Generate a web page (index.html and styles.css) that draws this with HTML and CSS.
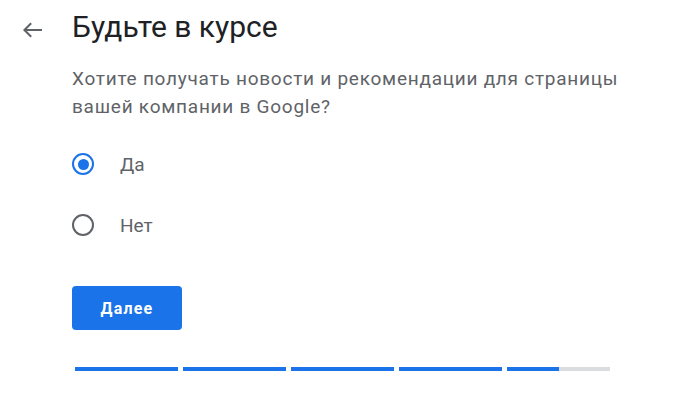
FILE: index.html
```html
<!DOCTYPE html>
<html lang="ru">
<head>
<meta charset="utf-8">
<link rel="stylesheet" href="styles.css">
</head>
<body>
<div class="page">
  <div class="header">
    <div class="back">
      <svg width="20" height="16" viewBox="0 0 20 16"><path d="M20 8H2.5M9.2 1.2L2.4 8l6.8 6.8" fill="none" stroke="#5f6368" stroke-width="2"/></svg>
    </div>
    <h1 class="title">Будьте в курсе</h1>
  </div>
  <div class="content">
    <p class="desc">Хотите получать новости и рекомендации для страницы вашей компании в Google?</p>
    <div class="options">
      <label class="option"><span class="radio checked"></span><span class="label">Да</span></label>
      <label class="option"><span class="radio"></span><span class="label">Нет</span></label>
    </div>
    <button class="next">Далее</button>
    <div class="progress">
      <div class="seg"><div class="fill" style="width:100%"></div></div>
      <div class="seg"><div class="fill" style="width:100%"></div></div>
      <div class="seg"><div class="fill" style="width:100%"></div></div>
      <div class="seg"><div class="fill" style="width:100%"></div></div>
      <div class="seg"><div class="fill" style="width:50%"></div></div>
    </div>
  </div>
</div>
</body>
</html>
```
FILE: styles.css
```css
html, body {
  margin: 0;
  padding: 0;
  background: #fff;
}
body {
  font-family: Roboto, "Liberation Sans", Arial, sans-serif;
  width: 682px;
  height: 405px;
  overflow: hidden;
}
.page {
  padding-top: 9px;
}
.header {
  display: flex;
  align-items: flex-start;
  padding-left: 22px;
  gap: 30px;
  height: 36px;
}
.back {
  width: 20px;
  height: 16px;
  margin-top: 13px;
  display: flex;
}
.title {
  margin: 0;
  font-size: 30px;
  line-height: 36px;
  font-weight: 400;
  color: #202124;
}
.content {
  padding-left: 72px;
}
.desc {
  margin: 20px 0 0;
  width: 560px;
  font-size: 19px;
  letter-spacing: 0.75px;
  line-height: 28px;
  color: #5f6368;
}
.options {
  margin-top: 19px;
  display: flex;
  flex-direction: column;
  gap: 13px;
}
.option {
  display: flex;
  align-items: center;
  height: 48px;
  gap: 26px;
}
.radio {
  box-sizing: border-box;
  width: 22px;
  height: 22px;
  border: 2.5px solid #5f6368;
  border-radius: 50%;
  display: flex;
  align-items: center;
  justify-content: center;
  flex-shrink: 0;
}
.radio.checked {
  border-color: #1a73e8;
}
.radio.checked::after {
  content: "";
  width: 11px;
  height: 11px;
  border-radius: 50%;
  background: #1a73e8;
}
.label {
  font-size: 19px;
  color: #5f6368;
}
.next {
  margin-top: 37px;
  display: block;
  width: 110px;
  height: 44px;
  border: 0;
  border-radius: 4px;
  background: #1a73e8;
  color: #fff;
  font-family: Roboto, "Liberation Sans", Arial, sans-serif;
  font-size: 16px;
  font-weight: 700;
  letter-spacing: 1.2px;
  padding: 0;
}
.progress {
  margin-top: 37px;
  margin-left: 3px;
  display: flex;
  gap: 5px;
}
.seg {
  width: 103px;
  height: 4px;
  background: #dadce0;
}
.fill {
  height: 100%;
  background: #1a73e8;
}
```
